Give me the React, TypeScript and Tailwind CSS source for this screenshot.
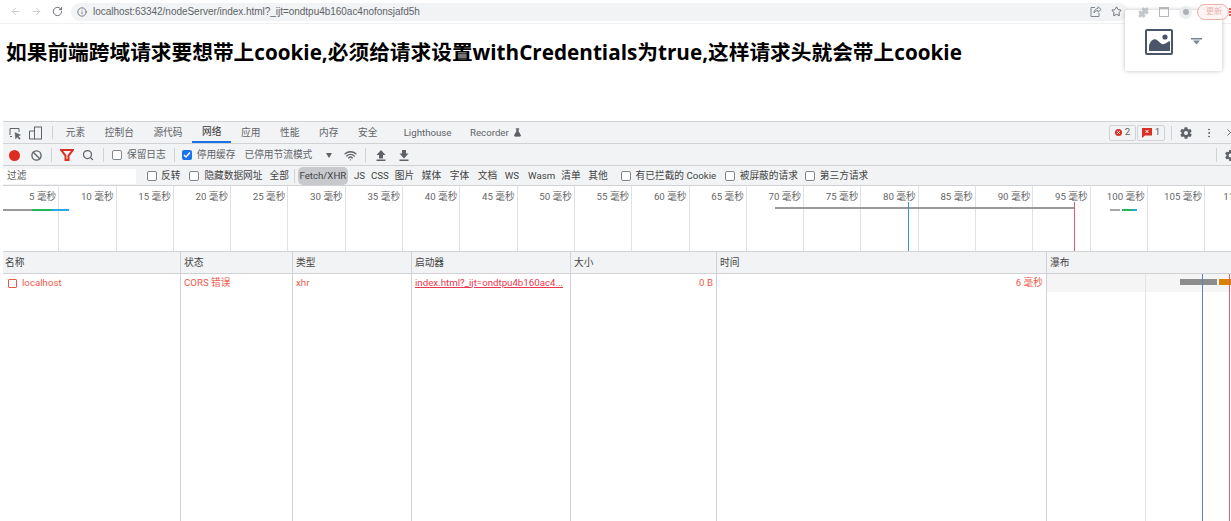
import React from "react";
import { ArrowLeft, ArrowRight, RotateCw, Info, Star, Puzzle, Search, Wifi, FlaskConical, MoreVertical, X, Ban } from "lucide-react";

const Box = ({ checked = false, className = "" }: { checked?: boolean; className?: string }) =>
  checked ? (
    <span className={`w-[10px] h-[10px] rounded-[2px] bg-[#1a73e8] flex items-center justify-center shrink-0 ${className}`}>
      <svg width="8" height="8" viewBox="0 0 8 8"><path d="M1 4l2 2 4-4.500" fill="none" stroke="#fff" strokeWidth="1.400" /></svg>
    </span>
  ) : (
    <span className={`w-[10px] h-[10px] rounded-[2px] border border-[#80868b] bg-white shrink-0 ${className}`} />
  );

const Divider = ({ className = "" }: { className?: string }) => <span className={`w-px h-[14px] bg-[#d0d2d5] shrink-0 ${className}`} />;

const Gear = ({ size, className = "" }: { size: number; className?: string }) => (
  <svg width={size} height={size} viewBox="0 0 24 24" className={`shrink-0 ${className}`}>
    <path fillRule="evenodd" fill="#5f6368" d="M19.400 13c.1-.3.1-.7.1-1s0-.7-.1-1l2.100-1.600c.2-.2.2-.4.1-.6l-2-3.500c-.1-.2-.4-.3-.6-.2l-2.500 1c-.5-.4-1.100-.7-1.700-1l-.4-2.700c0-.2-.2-.4-.5-.4h-4c-.3 0-.5.2-.5.4l-.4 2.700c-.6.3-1.200.6-1.700 1l-2.500-1c-.2-.1-.5 0-.6.2l-2 3.500c-.1.2-.1.4.1.6L4.600 11c-.1.3-.1.7-.1 1s0 .7.1 1l-2.100 1.600c-.2.2-.2.4-.1.600l2 3.500c.1.2.4.3.6.2l2.500-1c.5.4 1.100.7 1.700 1l.4 2.700c0 .2.2.4.5.4h4c.3 0 .5-.2.5-.4l.4-2.700c.6-.3 1.200-.6 1.700-1l2.500 1c.2.1.5 0 .6-.2l2-3.500c.1-.2.1-.4-.1-.6zM12 15.500a3.500 3.500 0 1 1 0-7 3.500 3.500 0 0 1 0 7z" />
  </svg>
);

const tabs = [
  ["元素", "ml-[53px] px-[9.8px]"],
  ["控制台", "px-[9.8px]"],
  ["源代码", "px-[9.8px]"],
  ["网络", "px-[9.8px] text-[#333] border-b-2 border-[#1a73e8]"],
  ["应用", "px-[9.8px]"],
  ["性能", "px-[9.8px]"],
  ["内存", "px-[9.8px]"],
  ["安全", "px-[9.8px]"],
];

const ticks = Array.from({ length: 21 }, (_, i) => (i + 1) * 5);

const columns = [
  { title: "名称", w: "w-[178px]" },
  { title: "状态", w: "w-[112px]" },
  { title: "类型", w: "w-[119px]" },
  { title: "启动器", w: "w-[159px]" },
  { title: "大小", w: "w-[146px]" },
  { title: "时间", w: "w-[330px]" },
];

export default function App() {
  return (
    <div className="relative w-[1231px] h-[521px] overflow-hidden bg-white flex flex-col font-['Roboto','Noto_Sans_CJK_SC',sans-serif] text-[9.7px] text-[#555]">
      {/* browser bar */}
      <div className="h-[24px] shrink-0 flex items-center border-b border-[#f0f1f3] pl-[10px]">
        <ArrowLeft size={11} className="text-[#c4c7cb]" />
        <ArrowRight size={11} className="text-[#c4c7cb] ml-[10px]" />
        <RotateCw size={11} className="text-[#5f6368] ml-[10px]" />
        <div className="ml-[8px] w-[1057px] h-[18px] rounded-full bg-[#f1f3f4] flex items-center pl-[6px] shrink-0">
          <Info size={10} className="text-[#5f6368]" />
          <span className="ml-[6px] text-[#5f6368] text-[10px] font-['Liberation_Sans',sans-serif] tracking-[-0.03px]">localhost:63342/nodeServer/index.html?_ijt=ondtpu4b160ac4nofonsjafd5h</span>
          <svg width="12" height="11" viewBox="0 0 12 11" fill="none" stroke="#80868b" className="ml-auto mr-[26px] shrink-0">
            <path d="M5 1.500H1v9h8V7" />
            <path d="M4 7c0-3 2-4.500 4-4.500V.8l3.200 2.700L8 6.200V4.500C6.500 4.500 5 5.200 4 7z" />
          </svg>
        </div>
      </div>
      <div className="absolute top-[6px] left-[1111px]"><Star size={11} className="text-[#5f6368]" /></div>

      {/* page content */}
      <div className="h-[97px] shrink-0 pt-[15px] pl-[6px]">
        <h1 className="text-[20.7px] leading-[26px] font-bold text-black font-['Open_Sans','Noto_Sans_CJK_SC',sans-serif] whitespace-nowrap">如果前端跨域请求要想带上cookie,必须给请求设置withCredentials为true,这样请求头就会带上cookie</h1>
      </div>

      {/* devtools */}
      <div className="flex-1 min-h-0 ml-[3px] flex flex-col border-t border-[#d0d2d5]">
        {/* tabs */}
        <div className="h-[22px] shrink-0 bg-[#f1f3f4] border-b border-[#d0d2d5] flex items-center relative text-[#5f6368]">
          <div className="absolute left-[6px] top-[4px] flex items-center gap-[6px]">
            <svg width="13" height="13" viewBox="0 0 13 13" fill="none" stroke="#5f6368">
              <path d="M1 8V1.500h9V5M3 9.500H1" />
              <path d="M6 5.500l5.500 2.500-2.300 1 2 2.500-1 .8-2-2.500-1.500 2z" fill="#5f6368" strokeWidth="0.500" />
            </svg>
            <svg width="15" height="14" viewBox="0 0 15 14" fill="none" stroke="#5f6368">
              <rect x="6.500" y="1" width="7" height="12" />
              <path d="M6.500 5H1.500v8h5" />
            </svg>
          </div>
          <span className="absolute left-[49px] top-[4px] w-px h-[13px] bg-[#d0d2d5]" />
          {tabs.map(([t, c]) => (
            <span key={t} className={`h-full flex items-center shrink-0 pt-[1px] ${c}`}>{t}</span>
          ))}
          <span className="ml-[16.5px] pt-[1px]">Lighthouse</span>
          <span className="ml-[18.5px] pt-[1px] flex items-center gap-[4px]">Recorder <FlaskConical size={9} fill="#5f6368" /></span>
          <div className="ml-auto flex items-center pr-[2px]">
            <span className="h-[16px] w-[27px] border border-[#d0d2d5] rounded-[2px] flex items-center justify-center gap-[3px]">
              <span className="w-[7px] h-[7px] rounded-full bg-[#d93025] flex items-center justify-center"><X size={5} strokeWidth={4} className="text-white" /></span>2
            </span>
            <span className="ml-[1px] h-[16px] w-[28px] border border-[#d0d2d5] rounded-[2px] flex items-center justify-center gap-[3px]">
              <svg width="10" height="10" viewBox="0 0 10 10"><path d="M0 0h10v7.500H3L0 10z" fill="#d93025" /><path d="M3.500 2l3 3M6.500 2l-3 3" stroke="#fff" /></svg>1
            </span>
            <Divider className="ml-[6px]" />
            <Gear size={14} className="ml-[7px]" />
            <MoreVertical size={12} className="ml-[10px] text-[#5f6368]" />
            <X size={11} className="ml-[10px] mr-[-7px] text-[#5f6368]" />
          </div>
        </div>
        {/* toolbar */}
        <div className="h-[22px] shrink-0 bg-[#f1f3f4] border-b border-[#d0d2d5] flex items-center text-[#5f6368] pl-[6px] pt-[1px]">
          <span className="w-[11px] h-[11px] rounded-full bg-[#dc2d20] shrink-0" />
          <Ban size={11} strokeWidth={3} className="ml-[11px] text-[#5f6368]" />
          <Divider className="ml-[9px]" />
          <svg width="14" height="12" viewBox="0 0 14 12" className="ml-[8px] shrink-0"><path d="M1 1h12L8.500 6.500V11h-3V6.500z" fill="none" stroke="#d93025" strokeWidth="2" /></svg>
          <Search size={12} strokeWidth={2.500} className="ml-[8px]" />
          <Divider className="ml-[9px]" />
          <Box className="ml-[8px]" />
          <span className="ml-[5px]">保留日志</span>
          <Divider className="ml-[8px]" />
          <Box checked className="ml-[7px]" />
          <span className="ml-[5px]">停用缓存</span>
          <span className="ml-[9px]">已停用节流模式</span>
          <span className="ml-[14px] w-0 h-0 border-x-[3px] border-x-transparent border-t-[5px] border-t-[#5f6368]" />
          <Wifi size={13} strokeWidth={2.500} className="ml-[12px]" />
          <Divider className="ml-[8px]" />
          <svg width="10" height="11" viewBox="0 0 10 11" className="ml-[10px] shrink-0"><path d="M5 0l4.500 5H7v3.500H3V5H.500zM.500 9.500h9V11h-9z" fill="#5f6368" /></svg>
          <svg width="10" height="11" viewBox="0 0 10 11" className="ml-[13px] shrink-0"><path d="M3 0h4v3.500h2.500L5 8.500.5 3.500H3zM.500 9.500h9V11h-9z" fill="#5f6368" /></svg>
          <Divider className="ml-auto" />
          <Gear size={13} className="ml-[7px] mr-[-6px]" />
        </div>
        {/* filter */}
        <div className="h-[20px] shrink-0 bg-[#f1f3f4] border-b border-[#d0d2d5] flex items-center text-[#444] pt-[1px]">
          <div className="w-[133px] h-[15px] bg-white pl-[4px] flex items-center text-[#555] shrink-0">过滤</div>
          <Box className="ml-[11px]" />
          <span className="ml-[4px]">反转</span>
          <Box className="ml-[9px]" />
          <span className="ml-[5px]">隐藏数据网址</span>
          <span className="ml-[7px]">全部</span>
          <Divider className="ml-[5px]" />
          <span className="ml-[3px] h-[18px] w-[50px] rounded-[5px] bg-[#c7c9cc] flex items-center justify-center shrink-0 whitespace-nowrap">Fetch/XHR</span>
          <span className="ml-[6px]">JS</span>
          <span className="ml-[6px]">CSS</span>
          <span className="ml-[6px]">图片</span>
          <span className="ml-[7.6px]">媒体</span>
          <span className="ml-[8.6px]">字体</span>
          <span className="ml-[8.6px]">文档</span>
          <span className="ml-[7.6px]">WS</span>
          <span className="ml-[9px]">Wasm</span>
          <span className="ml-[6px]">清单</span>
          <span className="ml-[7.6px]">其他</span>
          <Box className="ml-[13px]" />
          <span className="ml-[5px]">有已拦截的 Cookie</span>
          <Box className="ml-[9px]" />
          <span className="ml-[4.5px]">被屏蔽的请求</span>
          <Box className="ml-[7px]" />
          <span className="ml-[5px]">第三方请求</span>
        </div>
        {/* overview */}
        <div className="relative h-[66px] shrink-0 flex overflow-hidden border-b border-[#d0d2d5]">
          {ticks.map((t, i) => (
            <div key={t} className={`shrink-0 h-full border-r border-[#e0e1e3] text-right pr-[2px] pt-[4px] whitespace-nowrap text-[#666] ${i === 0 ? "w-[56.3px]" : "w-[57.3px]"}`}>
              {t} 毫秒
            </div>
          ))}
          <span className="pl-[18px] pt-[4px] text-[#666] whitespace-nowrap">11</span>
          <div className="absolute left-0 top-[23px] h-[2px] w-[29px] bg-[#9a9a9a]" />
          <div className="absolute left-[29px] top-[23px] h-[2px] w-[20px] bg-[#27b560]" />
          <div className="absolute left-[49px] top-[23px] h-[2px] w-[17px] bg-[#2aa9e8]" />
          <div className="absolute left-[772px] top-[21px] h-[2px] w-[299px] bg-[#999]" />
          <div className="absolute left-[905px] top-[16px] h-[50px] w-px bg-[#3f8fe0]" />
          <div className="absolute left-[1071px] top-[16px] h-[50px] w-px bg-[#e0606a]" />
          <div className="absolute left-[1107px] top-[23px] h-[2px] w-[10px] bg-[#a8a8a8]" />
          <div className="absolute left-[1119px] top-[23px] h-[2px] w-[11px] bg-[#27b560]" />
          <div className="absolute left-[1130px] top-[23px] h-[2px] w-[4px] bg-[#2aa9e8]" />
        </div>
        {/* table */}
        <div className="flex-1 min-h-0 flex">
          {columns.map((c, i) => (
            <div key={c.title} className={`${c.w} shrink-0 border-r border-[#d0d2d5] flex flex-col`}>
              <div className={`h-[22px] bg-[#f1f3f4] border-b border-[#d0d2d5] flex items-center text-[#444] pt-[1px] ${i === 0 ? "px-[2px]" : "px-[3px]"}`}>{c.title}</div>
              <div className="h-[18px] flex items-center px-[3px] text-[#ee5a4c] whitespace-nowrap overflow-hidden">
                {i === 0 && (
                  <>
                    <span className="ml-[2px] w-[9px] h-[9px] border border-[#ee5a4c] rounded-[1px] shrink-0" />
                    <span className="ml-[5px]">localhost</span>
                  </>
                )}
                {i === 1 && "CORS 错误"}
                {i === 2 && "xhr"}
                {i === 3 && <span className="underline text-[#e8384f]">index.html?_ijt=ondtpu4b160ac4...</span>}
                {i === 4 && <span className="ml-auto">0 B</span>}
                {i === 5 && <span className="ml-auto">6 毫秒</span>}
              </div>
            </div>
          ))}
          <div className="relative flex-1 min-w-0 flex flex-col">
            <div className="h-[22px] bg-[#f1f3f4] border-b border-[#d0d2d5] flex items-center px-[3px] text-[#444] pt-[1px]">瀑布</div>
            <div className="h-[18px] bg-[#f5f5f5]" />
            <div className="absolute left-[98px] top-[22px] bottom-0 w-px bg-[#e3e4e6]" />
            <div className="absolute left-[133px] top-[27px] h-[6px] w-[37px] bg-[#8c8c8c]" />
            <div className="absolute left-[172px] top-[27px] h-[6px] w-[12px] bg-[#d98200]" />
            <div className="absolute left-[155px] top-[22px] bottom-0 w-px bg-[#5b84b8]" />
            <div className="absolute left-[182px] top-[22px] bottom-0 w-px bg-[#e0606a]" />
          </div>
        </div>
      </div>

      {/* floating widget */}
      <div className="absolute left-[1125px] top-[10px] w-[97px] h-[61px] bg-white rounded-[2px] shadow-[0_0_4px_rgba(0,0,0,0.25)] flex items-center pl-[20px] pt-[2px]">
        <svg width="28" height="26" viewBox="0 0 28 26" className="shrink-0">
          <rect x="1" y="1" width="26" height="24" rx="1" fill="none" stroke="#4a5568" strokeWidth="2" />
          <path d="M4 22v-5c1-5 5-8 8-6s4 5 7 4 3-2 6-3v10z" fill="#4a5568" />
          <circle cx="20" cy="8" r="2.600" fill="#4a5568" />
        </svg>
        <svg width="11" height="7" viewBox="0 0 11 7" className="ml-[18px] shrink-0"><path d="M0 0h11v1.500H0zM2 2.500h7L5.500 6.500z" fill="#7b8494" /></svg>
      </div>

      {/* browser toolbar icons showing through the top of the popup */}
      <div className="absolute top-[4px] left-[1138px] flex items-center opacity-80">
        <Puzzle size={11} fill="#b5b8bc" className="text-[#b5b8bc]" />
        <span className="ml-[10px] w-[10px] h-[10px] border border-[#a5a8ac] border-t-2" />
        <span className="ml-[10px] w-[13px] h-[13px] rounded-full bg-[#e8eaed] flex items-center justify-center"><span className="w-[6px] h-[6px] rounded-full bg-[#9aa0a6]" /></span>
        <span className="ml-[5px] w-[32px] h-[16px] rounded-full border border-[#e8a09a] bg-[#fdf3f2] text-[#e8a09a] text-[8px] pl-[8px] flex items-center shrink-0">更新</span>
      </div>
      <div className="absolute left-[1229px] top-[8px] flex flex-col gap-[1px]">
        <span className="w-[2px] h-[2px] bg-[#e05a4f]" />
        <span className="w-[2px] h-[2px] bg-[#e05a4f]" />
        <span className="w-[2px] h-[2px] bg-[#e05a4f]" />
      </div>
    </div>
  );
}
